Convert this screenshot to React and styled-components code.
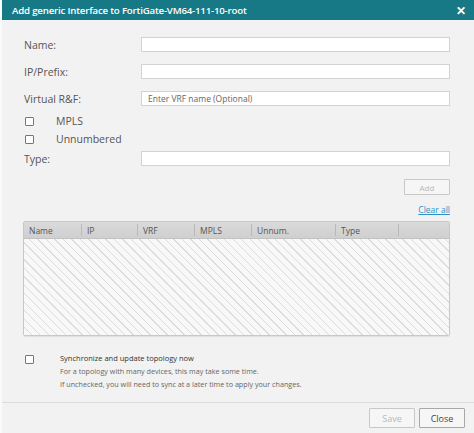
import React from "react";
import styled, { createGlobalStyle } from "styled-components";

const Global = createGlobalStyle`
  html, body { margin: 0; padding: 0; background: #fff; }
  body { font-family: "Open Sans", "Noto Sans", sans-serif; }
`;

const Dialog = styled.div`
  width: 474px;
  height: 433px;
  display: flex;
  flex-direction: column;
  background: #f2f2f2;
  box-sizing: border-box;
  border-left: 2px solid #fafafa;
`;

const TitleBar = styled.div`
  height: 20px;
  background: #177985;
  color: #fff;
  display: flex;
  align-items: center;
  justify-content: space-between;
  padding: 0 8px 0 10px;
  font-size: 9.7px;
  font-weight: 600;
  letter-spacing: -0.2px;
`;

const CloseX = styled.span`
  font-size: 12px;
  font-weight: 700;
`;

const Body = styled.div`
  flex: 1;
  padding: 17px 24px 0 22px;
  display: flex;
  flex-direction: column;
`;

const FieldRow = styled.div`
  display: flex;
  align-items: center;
  height: 15px;
  margin-bottom: ${(p) => p.$gap || 12}px;
`;

const Label = styled.label`
  width: 117px;
  font-size: 10.5px;
  color: #555;
`;

const Input = styled.input`
  flex: 1;
  height: 15px;
  box-sizing: border-box;
  border: 1px solid #d2d2d2;
  background: #fff;
  padding: 0 6px;
  font-family: inherit;
  font-size: 8.5px;
  color: #555;
  outline: none;
  &::placeholder { color: #666; }
`;

const CheckRow = styled.div`
  display: flex;
  align-items: center;
  height: 14px;
  margin-bottom: ${(p) => p.$gap || 4}px;
`;

const Box = styled.span`
  width: 7px;
  height: 7px;
  border: 1px solid #777;
  border-radius: 1px;
  background: #fff;
  margin-left: 1px;
  margin-right: ${(p) => p.$space || 22}px;
  flex-shrink: 0;
`;

const CheckLabel = styled.span`
  font-size: 10.5px;
  color: #555;
`;

const AddRow = styled.div`
  display: flex;
  justify-content: flex-end;
  margin-top: 1px;
`;

const Button = styled.button`
  width: ${(p) => p.$w || 46}px;
  height: ${(p) => p.$h || 16}px;
  background: #f6f6f6;
  border: 1px solid ${(p) => (p.disabled ? "#c8c8c8" : "#a8a8a8")};
  color: ${(p) => (p.disabled ? "#b8b8b8" : "#444")};
  font-family: inherit;
  font-size: ${(p) => p.$fs || 8}px;
  padding: 0;
  border-radius: 1px;
`;

const LinkRow = styled.div`
  display: flex;
  justify-content: flex-end;
  margin-top: 9px;
  height: 13px;
`;

const ClearLink = styled.a`
  font-size: 8.5px;
  color: #2b94c9;
  text-decoration: underline;
`;

const Table = styled.div`
  margin-top: 4px;
  margin-left: -1px;
  height: 113px;
  border: 1px solid #c8c8c8;
  border-radius: 2px;
  display: flex;
  flex-direction: column;
  overflow: hidden;
  box-shadow: 0 1px 1px rgba(0, 0, 0, 0.08);
`;

const Head = styled.div`
  height: 16px;
  display: flex;
  background: linear-gradient(#dadada, #cfcfcf);
  border-bottom: 1px solid #c2c2c2;
`;

const Col = styled.div`
  width: ${(p) => (p.$w ? `${p.$w}px` : "auto")};
  flex: ${(p) => (p.$w ? "0 0 auto" : "1")};
  box-sizing: border-box;
  padding-left: 5px;
  font-size: 8.5px;
  color: #555;
  display: flex;
  align-items: center;
  border-right: ${(p) => (p.$w ? "1px solid #b9b9b9" : "none")};
  margin: 2px 0;
`;

const Hatch = styled.div`
  flex: 1;
  background-color: #f8f8f8;
  background-image: repeating-linear-gradient(
    45deg,
    #f8f8f8 0px,
    #f8f8f8 5px,
    #dcdcdc 5px,
    #dcdcdc 6px
  );
`;

const Sync = styled.div`
  margin-top: 16px;
  display: flex;
  align-items: flex-start;
`;

const SyncText = styled.div`
  display: flex;
  flex-direction: column;
`;

const SyncTitle = styled.div`
  font-size: 7.5px;
  color: #333;
  line-height: 13px;
`;

const SyncNote = styled.div`
  font-size: 7.2px;
  color: #666;
  line-height: 13px;
`;

const SyncBox = styled(Box)`
  margin-top: 3px;
`;

const Footer = styled.div`
  height: 30px;
  border-top: 1px solid #dcdcdc;
  display: flex;
  justify-content: flex-end;
  align-items: center;
  gap: 4px;
  padding-right: 9px;
  margin-top: 11px;
`;

const cols = [
  { name: "Name", w: 58 },
  { name: "IP", w: 56 },
  { name: "VRF", w: 57 },
  { name: "MPLS", w: 57 },
  { name: "Unnum.", w: 84 },
  { name: "Type", w: 63 },
  { name: "" },
];

export default function App() {
  return (
    <>
      <Global />
      <Dialog>
        <TitleBar>
          <span>Add generic Interface to FortiGate-VM64-111-10-root</span>
          <CloseX>✕</CloseX>
        </TitleBar>
        <Body>
          <FieldRow>
            <Label>Name:</Label>
            <Input />
          </FieldRow>
          <FieldRow>
            <Label>IP/Prefix:</Label>
            <Input />
          </FieldRow>
          <FieldRow $gap={8}>
            <Label>Virtual R&amp;F:</Label>
            <Input placeholder="Enter VRF name (Optional)" />
          </FieldRow>
          <CheckRow>
            <Box />
            <CheckLabel>MPLS</CheckLabel>
          </CheckRow>
          <CheckRow $gap={5}>
            <Box />
            <CheckLabel>Unnumbered</CheckLabel>
          </CheckRow>
          <FieldRow>
            <Label>Type:</Label>
            <Input />
          </FieldRow>
          <AddRow>
            <Button disabled>Add</Button>
          </AddRow>
          <LinkRow>
            <ClearLink>Clear all</ClearLink>
          </LinkRow>
          <Table>
            <Head>
              {cols.map((c, i) => (
                <Col key={i} $w={c.w}>
                  {c.name}
                </Col>
              ))}
            </Head>
            <Hatch />
          </Table>
          <Sync>
            <SyncBox $space={26} />
            <SyncText>
              <SyncTitle>Synchronize and update topology now</SyncTitle>
              <SyncNote>For a topology with many devices, this may take some time.</SyncNote>
              <SyncNote>If unchecked, you will need to sync at a later time to apply your changes.</SyncNote>
            </SyncText>
          </Sync>
        </Body>
        <Footer>
          <Button disabled $w={46} $h={20} $fs={9}>Save</Button>
          <Button $w={46} $h={20} $fs={9}>Close</Button>
        </Footer>
      </Dialog>
    </>
  );
}
